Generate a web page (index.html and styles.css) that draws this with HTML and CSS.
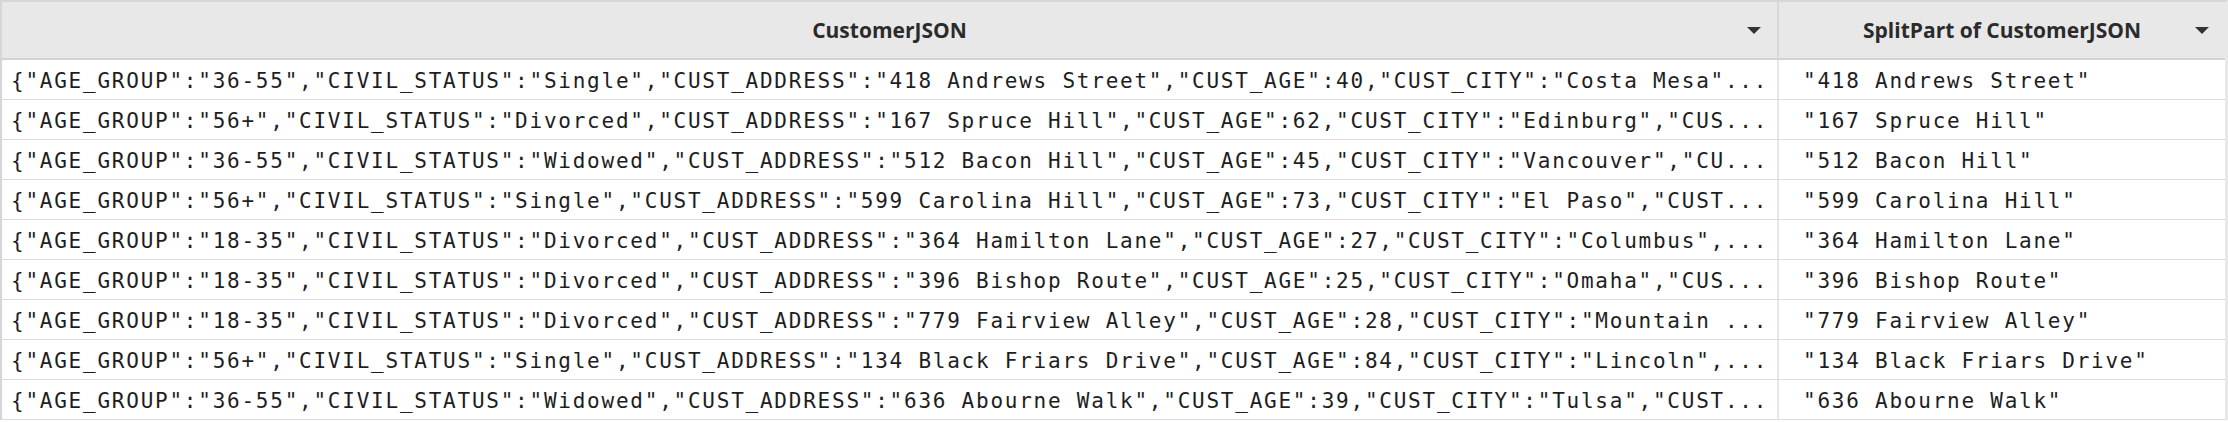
FILE: index.html
```html
<!DOCTYPE html>
<html>
<head>
<meta charset="utf-8">
<link rel="stylesheet" href="styles.css">
</head>
<body>
<div class="table">
  <div class="hcell c1"><span class="title">CustomerJSON</span><span class="caret"></span></div>
  <div class="hcell c2"><span class="title">SplitPart of CustomerJSON</span><span class="caret"></span></div>

  <div class="cell c1">{"AGE_GROUP":"36-55","CIVIL_STATUS":"Single","CUST_ADDRESS":"418 Andrews Street","CUST_AGE":40,"CUST_CITY":"Costa Mesa"...</div>
  <div class="cell c2">"418 Andrews Street"</div>

  <div class="cell c1">{"AGE_GROUP":"56+","CIVIL_STATUS":"Divorced","CUST_ADDRESS":"167 Spruce Hill","CUST_AGE":62,"CUST_CITY":"Edinburg","CUS...</div>
  <div class="cell c2">"167 Spruce Hill"</div>

  <div class="cell c1">{"AGE_GROUP":"36-55","CIVIL_STATUS":"Widowed","CUST_ADDRESS":"512 Bacon Hill","CUST_AGE":45,"CUST_CITY":"Vancouver","CU...</div>
  <div class="cell c2">"512 Bacon Hill"</div>

  <div class="cell c1">{"AGE_GROUP":"56+","CIVIL_STATUS":"Single","CUST_ADDRESS":"599 Carolina Hill","CUST_AGE":73,"CUST_CITY":"El Paso","CUST...</div>
  <div class="cell c2">"599 Carolina Hill"</div>

  <div class="cell c1">{"AGE_GROUP":"18-35","CIVIL_STATUS":"Divorced","CUST_ADDRESS":"364 Hamilton Lane","CUST_AGE":27,"CUST_CITY":"Columbus",...</div>
  <div class="cell c2">"364 Hamilton Lane"</div>

  <div class="cell c1">{"AGE_GROUP":"18-35","CIVIL_STATUS":"Divorced","CUST_ADDRESS":"396 Bishop Route","CUST_AGE":25,"CUST_CITY":"Omaha","CUS...</div>
  <div class="cell c2">"396 Bishop Route"</div>

  <div class="cell c1">{"AGE_GROUP":"18-35","CIVIL_STATUS":"Divorced","CUST_ADDRESS":"779 Fairview Alley","CUST_AGE":28,"CUST_CITY":"Mountain ...</div>
  <div class="cell c2">"779 Fairview Alley"</div>

  <div class="cell c1">{"AGE_GROUP":"56+","CIVIL_STATUS":"Single","CUST_ADDRESS":"134 Black Friars Drive","CUST_AGE":84,"CUST_CITY":"Lincoln",...</div>
  <div class="cell c2">"134 Black Friars Drive"</div>

  <div class="cell c1">{"AGE_GROUP":"36-55","CIVIL_STATUS":"Widowed","CUST_ADDRESS":"636 Abourne Walk","CUST_AGE":39,"CUST_CITY":"Tulsa","CUST...</div>
  <div class="cell c2">"636 Abourne Walk"</div>
</div>
</body>
</html>
```

FILE: styles.css
```css
* { box-sizing: border-box; }
html, body { margin: 0; padding: 0; background: #ffffff; }
body { width: 2228px; height: 422px; overflow: hidden; }

.table {
  display: grid;
  grid-template-columns: 1777px 446px;
  border-top: 2px solid #d6d6d6;
  border-left: 2px solid #d6d6d6;
  border-right: 3px solid #e8e8e8;
  width: 2228px;
}

.hcell {
  height: 58px;
  background: #e8e8e8;
  border-bottom: 2px solid #d2d2d2;
  display: flex;
  align-items: center;
  font-family: "Open Sans", "Noto Sans", sans-serif;
  font-weight: 700;
  font-size: 21px;
  color: #2b2b2b;
}
.hcell.c1 { border-right: 2px solid #d8d8d8; }

.title {
  flex: 1;
  text-align: center;
  padding-left: 30px;
}

.caret {
  width: 0;
  height: 0;
  border-left: 7px solid transparent;
  border-right: 7px solid transparent;
  border-top: 7px solid #333333;
  margin-right: 16px;
}

.cell {
  height: 40px;
  border-bottom: 1px solid #dcdcdc;
  padding-top: 8px;
  font-family: "DejaVu Sans Mono", "Liberation Mono", monospace;
  font-size: 21px;
  line-height: 27px;
  letter-spacing: 1.76px;
  color: #1e1e1e;
  white-space: nowrap;
  overflow: hidden;
}
.cell.c1 { border-right: 2px solid #e6e6e6; padding-left: 9px; }
.cell.c2 { padding-left: 24px; }
```
